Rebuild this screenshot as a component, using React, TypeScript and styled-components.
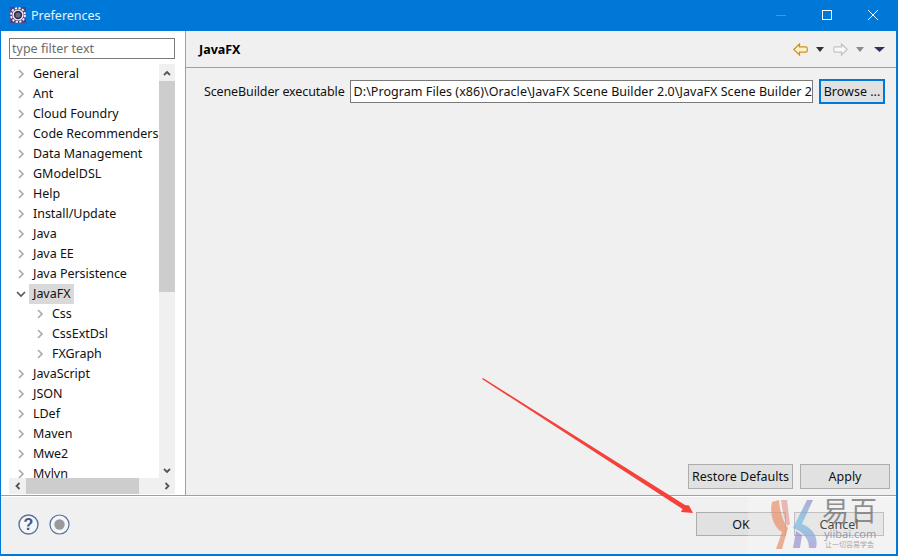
import { createGlobalStyle, styled } from 'styled-components';

const GlobalStyle = createGlobalStyle`
  html, body {
    margin: 0;
    padding: 0;
    background: #ffffff;
  }
  * {
    box-sizing: border-box;
  }
`;

const Window = styled.div`
  width: 898px;
  height: 556px;
  position: relative;
  overflow: hidden;
  display: flex;
  flex-direction: column;
  border: 1px solid #0078d7;
  border-width: 1px 2px 2px 1px;
  font-family: 'Noto Sans', 'Open Sans', sans-serif;
  font-size: 12.5px;
  color: #111;
  background: #f0f0f0;
`;
const TitleBar = styled.div`
  height: 30px;
  flex: none;
  background: #0078d7;
  color: #fff;
  display: flex;
  align-items: center;
  padding: 0 0 2px 9px;
`;
const TitleText = styled.span`
  margin-left: 5px;
  font-size: 12.5px;
  color: #e6f2fb;
`;
const WindowButtons = styled.div`
  margin-left: auto;
  display: flex;
`;
const WindowButton = styled.div`
  width: 46px;
  height: 28px;
  display: flex;
  align-items: center;
  justify-content: center;
`;
const Main = styled.div`
  flex: 1;
  display: flex;
  min-height: 0;
`;
const LeftPanel = styled.div`
  width: 185px;
  flex: none;
  background: #fff;
  border-right: 1px solid #a0a0a0;
  padding: 7px 10px 0 8px;
  display: flex;
  flex-direction: column;
`;
const FilterInput = styled.div`
  height: 21px;
  flex: none;
  border: 1px solid #7a7a7a;
  color: #6d6d6d;
  line-height: 20px;
  padding-left: 2px;
  font-size: 12.5px;
`;
const TreeArea = styled.div`
  margin-top: 5px;
  flex: 1;
  min-height: 0;
  display: flex;
`;
const Tree = styled.div`
  flex: 1;
  min-width: 0;
  overflow: hidden;
`;
const TreeRow = styled.div<{ $child?: boolean }>`
  height: 20px;
  display: flex;
  align-items: center;
  padding-left: ${(p) => (p.$child ? 26 : 7)}px;
  white-space: nowrap;
`;
const Twist = styled.svg`
  width: 10px;
  height: 10px;
  flex: none;
  margin-right: 7px;
`;
const TreeLabel = styled.span<{ $selected?: boolean }>`
  padding: 0 4px 0 ${(p) => (p.$selected ? 4 : 0)}px;
  margin-left: ${(p) => (p.$selected ? -4 : 0)}px;
  line-height: 20px;
  letter-spacing: -0.03px;
  background: ${(p) => (p.$selected ? '#d9d9d9' : 'transparent')};
`;
const VScroll = styled.div`
  width: 16px;
  flex: none;
  background: #f0f0f0;
  display: flex;
  flex-direction: column;
  align-items: stretch;
`;
const ScrollEnd = styled.div`
  height: 17px;
  flex: none;
  display: flex;
  align-items: center;
  justify-content: center;
`;
const VThumb = styled.div`
  height: 211px;
  flex: none;
  background: #cdcdcd;
`;
const VFill = styled.div`
  flex: 1;
`;
const HScroll = styled.div`
  height: 16px;
  flex: none;
  background: #f0f0f0;
  display: flex;
  align-items: stretch;
  margin-bottom: 1px;
`;
const HEnd = styled.div`
  width: 17px;
  flex: none;
  display: flex;
  align-items: center;
  justify-content: center;
`;
const HThumb = styled.div`
  width: 113px;
  flex: none;
  background: #cdcdcd;
`;
const HFill = styled.div`
  flex: 1;
`;
const RightPanel = styled.div`
  flex: 1;
  min-width: 0;
  display: flex;
  flex-direction: column;
`;
const PageHeader = styled.div`
  height: 36px;
  flex: none;
  border-bottom: 1px solid #a0a0a0;
  display: flex;
  align-items: center;
  padding: 0 11px 0 13px;
  margin-top: 1px;
`;
const PageTitle = styled.div`
  font-weight: 700;
  font-size: 12.5px;
  color: #000;
`;
const HeaderTools = styled.div`
  margin-left: auto;
  display: flex;
  align-items: center;
`;
const ArrowIcon = styled.svg<{ $flip?: boolean }>`
  transform: ${(p) => (p.$flip ? 'scaleX(-1)' : 'none')};
`;
const DropIcon = styled.svg<{ $before: number; $after: number }>`
  margin: 0 ${(p) => p.$after}px 0 ${(p) => p.$before}px;
`;
const SettingRow = styled.div`
  display: flex;
  align-items: center;
  padding: 11px 11px 0 18px;
`;
const SettingLabel = styled.div`
  white-space: nowrap;
  margin-right: 5px;
  letter-spacing: -0.13px;
`;
const PathInput = styled.div`
  flex: 1;
  min-width: 0;
  height: 23px;
  border: 1px solid #7a7a7a;
  background: #fff;
  overflow: hidden;
  white-space: nowrap;
  line-height: 21px;
  padding-left: 3px;
  letter-spacing: 0.05px;
`;
const BrowseButton = styled.div`
  width: 66px;
  height: 25px;
  margin-left: 6px;
  border: 2px solid #0078d7;
  background: #e1e1e1;
  text-align: center;
  line-height: 21px;
`;
const Spacer = styled.div`
  flex: 1;
`;
const PageActions = styled.div`
  display: flex;
  justify-content: flex-end;
  gap: 7px;
  padding: 0 6px 6px 0;
`;
const ActionButton = styled.div<{ $width: number; $height?: number }>`
  width: ${(p) => p.$width}px;
  height: ${(p) => p.$height ?? 25}px;
  border: 1px solid #adadad;
  background: #e1e1e1;
  text-align: center;
  line-height: 23px;
`;
const Footer = styled.div`
  height: 59px;
  flex: none;
  border-top: 1px solid #a0a0a0;
  box-shadow: inset 0 1px 0 #fff;
  display: flex;
  align-items: center;
  padding: 0 12px 2px 17px;
`;
const FooterIcons = styled.div`
  display: flex;
  gap: 10px;
`;
const FooterButtons = styled.div`
  margin-left: auto;
  display: flex;
  gap: 8px;
`;
const ArrowOverlay = styled.svg`
  position: absolute;
  left: 0;
  top: 0;
  pointer-events: none;
`;
const Watermark = styled.div`
  position: absolute;
  left: 747px;
  top: 495px;
  width: 149px;
  height: 58px;
  background: rgba(255, 255, 255, 0.22);
  pointer-events: none;
`;
const WatermarkLogo = styled.svg`
  position: absolute;
  left: 21px;
  top: 2px;
`;
const WatermarkBrand = styled.div`
  position: absolute;
  left: 74px;
  top: -3px;
  font-family: 'Noto Sans CJK SC', sans-serif;
  font-size: 27px;
  letter-spacing: 1px;
  line-height: 34px;
  color: rgba(110, 110, 110, 0.75);
`;
const WatermarkSite = styled.div`
  position: absolute;
  left: 76px;
  top: 31px;
  font-size: 11px;
  line-height: 13px;
  color: rgba(120, 130, 150, 0.75);
`;
const WatermarkSlogan = styled.div`
  position: absolute;
  left: 77px;
  top: 44px;
  font-family: 'Noto Sans CJK SC', sans-serif;
  font-size: 7px;
  line-height: 9px;
  color: rgba(130, 130, 130, 0.7);
`;

const TREE = [
  { label: 'General' },
  { label: 'Ant' },
  { label: 'Cloud Foundry' },
  { label: 'Code Recommenders' },
  { label: 'Data Management' },
  { label: 'GModelDSL' },
  { label: 'Help' },
  { label: 'Install/Update' },
  { label: 'Java' },
  { label: 'Java EE' },
  { label: 'Java Persistence' },
  { label: 'JavaFX', open: true },
  { label: 'Css', child: true },
  { label: 'CssExtDsl', child: true },
  { label: 'FXGraph', child: true },
  { label: 'JavaScript' },
  { label: 'JSON' },
  { label: 'LDef' },
  { label: 'Maven' },
  { label: 'Mwe2' },
  { label: 'Mylyn' },
];

function Chevron({ dir, color = '#555', size = 8 }: { dir: 'up' | 'down' | 'left' | 'right'; color?: string; size?: number }) {
  const paths = {
    up: 'M1 6 L4 3 L7 6',
    down: 'M1 3 L4 6 L7 3',
    left: 'M5.5 1 L2.5 4 L5.5 7',
    right: 'M2.5 1 L5.5 4 L2.5 7',
  };
  return (
    <svg width={size} height={size} viewBox="0 0 8 8">
      <path d={paths[dir]} fill="none" stroke={color} strokeWidth="1.8" />
    </svg>
  );
}

function EclipseIcon() {
  return (
    <svg width="16" height="16" viewBox="0 0 16 16">
      <rect width="16" height="16" fill="#4f3f86" />
      <circle cx="8" cy="8" r="7" fill="none" stroke="#f4f4f4" strokeWidth="1.8" strokeDasharray="2.2 1.5" />
      <circle cx="8" cy="8" r="5.6" fill="#f0f0f0" />
      <circle cx="8" cy="8" r="4.2" fill="#2f2b4e" />
      <circle cx="8" cy="8" r="2.6" fill="#6c6a80" />
    </svg>
  );
}

function NavArrow({ flip, active }: { flip?: boolean; active?: boolean }) {
  return (
    <ArrowIcon $flip={flip} width="15" height="13" viewBox="0 0 15 13">
      <path
        d="M0.8 6.5 L6.5 1 V3.8 H12.8 Q14.2 3.8 14.2 5.2 V7.8 Q14.2 9.2 12.8 9.2 H6.5 V12 Z"
        fill={active ? '#fdf2c6' : '#f8f8f8'}
        stroke={active ? '#cc9126' : '#c2c2c2'}
        strokeWidth="1.2"
      />
    </ArrowIcon>
  );
}

function DropArrow({ color, before, after, wide }: { color: string; before: number; after: number; wide?: boolean }) {
  const width = wide ? 11 : 8;
  return (
    <DropIcon $before={before} $after={after} width={width} height="5" viewBox={`0 0 ${width} 5`}>
      <path d={`M0 0 H${width} L${width / 2} 5 Z`} fill={color} />
    </DropIcon>
  );
}

function App() {
  return (
    <>
      <GlobalStyle />
      <Window>
        <TitleBar>
          <EclipseIcon />
          <TitleText>Preferences</TitleText>
          <WindowButtons>
            <WindowButton>
              <svg width="10" height="10" viewBox="0 0 10 10">
                <path d="M0 5.5 H10" stroke="#3f9ae2" />
              </svg>
            </WindowButton>
            <WindowButton>
              <svg width="10" height="10" viewBox="0 0 10 10">
                <rect x="0.5" y="0.5" width="9" height="9" fill="none" stroke="#fff" />
              </svg>
            </WindowButton>
            <WindowButton>
              <svg width="10" height="10" viewBox="0 0 10 10">
                <path d="M0 0 L10 10 M10 0 L0 10" stroke="#fff" />
              </svg>
            </WindowButton>
          </WindowButtons>
        </TitleBar>
        <Main>
          <LeftPanel>
            <FilterInput>type filter text</FilterInput>
            <TreeArea>
              <Tree>
                {TREE.map((item) => (
                  <TreeRow key={item.label} $child={item.child}>
                    <Twist viewBox="0 0 10 10">
                      <path
                        d={item.open ? 'M1 3 L5 7 L9 3' : 'M3 1 L7 5 L3 9'}
                        fill="none"
                        stroke={item.open ? '#555' : '#a9a9a9'}
                        strokeWidth="1.6"
                      />
                    </Twist>
                    <TreeLabel $selected={item.open}>{item.label}</TreeLabel>
                  </TreeRow>
                ))}
              </Tree>
              <VScroll>
                <ScrollEnd>
                  <Chevron dir="up" />
                </ScrollEnd>
                <VThumb />
                <VFill />
                <ScrollEnd>
                  <Chevron dir="down" />
                </ScrollEnd>
              </VScroll>
            </TreeArea>
            <HScroll>
              <HEnd>
                <Chevron dir="left" />
              </HEnd>
              <HThumb />
              <HFill />
              <HEnd>
                <Chevron dir="right" />
              </HEnd>
            </HScroll>
          </LeftPanel>
          <RightPanel>
            <PageHeader>
              <PageTitle>JavaFX</PageTitle>
              <HeaderTools>
                <NavArrow active />
                <DropArrow color="#333" before={8} after={9} />
                <NavArrow flip />
                <DropArrow color="#8a8a8a" before={8} after={10} />
                <DropArrow color="#3c2a5c" before={0} after={0} wide />
              </HeaderTools>
            </PageHeader>
            <SettingRow>
              <SettingLabel>SceneBuilder executable</SettingLabel>
              <PathInput>D:\Program Files (x86)\Oracle\JavaFX Scene Builder 2.0\JavaFX Scene Builder 2.0.exe</PathInput>
              <BrowseButton>Browse ...</BrowseButton>
            </SettingRow>
            <Spacer />
            <PageActions>
              <ActionButton $width={105}>Restore Defaults</ActionButton>
              <ActionButton $width={90}>Apply</ActionButton>
            </PageActions>
          </RightPanel>
        </Main>
        <Footer>
          <FooterIcons>
            <svg width="21" height="21" viewBox="0 0 21 21">
              <circle cx="10.5" cy="10.5" r="9.5" fill="#f4f6fa" stroke="#5b7299" strokeWidth="1.4" />
              <text x="10.5" y="16" textAnchor="middle" fontSize="16" fontWeight="700" fontFamily="Liberation Sans, sans-serif" fill="#44597f">
                ?
              </text>
            </svg>
            <svg width="21" height="21" viewBox="0 0 21 21">
              <circle cx="10.5" cy="10.5" r="9.5" fill="#f4f6fa" stroke="#5b7299" strokeWidth="1.2" />
              <circle cx="10.5" cy="10.5" r="5.2" fill="#9a9a9a" />
            </svg>
          </FooterIcons>
          <FooterButtons>
            <ActionButton $width={90} $height={24}>OK</ActionButton>
            <ActionButton $width={90} $height={24}>Cancel</ActionButton>
          </FooterButtons>
        </Footer>
        <Watermark>
          <WatermarkLogo width="48" height="54" viewBox="0 0 48 54">
            <defs>
              <linearGradient id="wmBlue" x1="0" y1="0" x2="0" y2="1">
                <stop offset="0" stopColor="#9a94cc" />
                <stop offset="0.45" stopColor="#79c0e2" />
                <stop offset="1" stopColor="#a49ad0" />
              </linearGradient>
            </defs>
            <path d="M3 4 L10 2 C11 14 14 24 19 30 L13 51 L7 51 L13 34 C5 30 0 16 3 4 Z" fill="#e8906a" opacity="0.7" />
            <path d="M12 2 L18 2 L21 26 L18 28 C15 20 13 12 12 2 Z" fill="#e28f8a" opacity="0.6" />
            <path d="M44 2 L38 2 L24 30 C30 32 40 38 40 50 L47 50 C50 38 42 29 33 26 Z" fill="url(#wmBlue)" opacity="0.75" />
            <path d="M24 50 L27 33 L33 37 L31 50 Z" fill="#8f8ccc" opacity="0.65" />
          </WatermarkLogo>
          <WatermarkBrand>易百</WatermarkBrand>
          <WatermarkSite>yiibai.com</WatermarkSite>
          <WatermarkSlogan>让一切容易学会</WatermarkSlogan>
        </Watermark>
        <ArrowOverlay width="898" height="556" viewBox="0 0 898 556">
          <path d="M481 378 L482 377 L684 504 L688 504.5 L692 512 L680 511 L681.5 508 Z" fill="#f4413a" />
        </ArrowOverlay>
      </Window>
    </>
  );
}

export default App;
